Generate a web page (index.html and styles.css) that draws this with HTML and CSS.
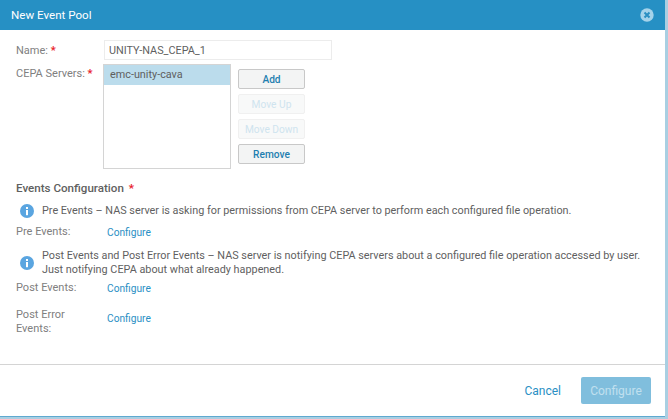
FILE: index.html
```html
<!DOCTYPE html>
<html lang="en">
<head>
  <meta charset="UTF-8">
  <meta name="viewport" content="width=device-width, initial-scale=1.0">
  <title>New Event Pool</title>
  <link rel="stylesheet" href="styles.css">
</head>
<body>

  <div class="dialog">
    <!-- Title bar -->
    <div class="dialog-header">
      <span>New Event Pool</span>
      <svg class="close-icon" width="14" height="14" viewBox="0 0 14 14">
        <circle cx="7" cy="7" r="6.7" fill="#a5d3ea"/>
        <path d="M4.5 4.5l5 5M9.5 4.5l-5 5" stroke="#2a8fc2" stroke-width="2" fill="none"/>
      </svg>
    </div>

    <div class="dialog-body">
      <div class="name-row">
        <label class="field-label">Name: <span class="required">*</span></label>
        <input class="name-input" type="text" value="UNITY-NAS_CEPA_1">
      </div>

      <div class="servers-row">
        <label class="field-label">CEPA Servers: <span class="required">*</span></label>
        <div class="server-list">
          <div class="server-item">emc-unity-cava</div>
        </div>
        <div class="server-buttons">
          <button class="btn">Add</button>
          <button class="btn" disabled>Move Up</button>
          <button class="btn" disabled>Move Down</button>
          <button class="btn">Remove</button>
        </div>
      </div>

      <h3 class="section-title">Events Configuration <span class="required">*</span></h3>

      <div class="info-row info-pre">
        <svg class="info-icon" width="14" height="14" viewBox="0 0 14 14">
          <circle cx="7" cy="7" r="7" fill="#5aa5e0"/>
          <rect x="6" y="6" width="2" height="5.2" fill="#fff"/>
          <rect x="6" y="3" width="2" height="2" fill="#fff"/>
        </svg>
        <p>Pre Events – NAS server is asking for permissions from CEPA server to perform each configured file operation.</p>
      </div>
      <div class="event-row">
        <span class="event-label">Pre Events:</span>
        <a class="link" href="#">Configure</a>
      </div>

      <div class="info-row info-post">
        <svg class="info-icon" width="14" height="14" viewBox="0 0 14 14">
          <circle cx="7" cy="7" r="7" fill="#5aa5e0"/>
          <rect x="6" y="6" width="2" height="5.2" fill="#fff"/>
          <rect x="6" y="3" width="2" height="2" fill="#fff"/>
        </svg>
        <p>Post Events and Post Error Events – NAS server is notifying CEPA servers about a configured file operation accessed by user.<br>Just notifying CEPA about what already happened.</p>
      </div>
      <div class="event-row event-post">
        <span class="event-label">Post Events:</span>
        <a class="link" href="#">Configure</a>
      </div>
      <div class="event-row event-error">
        <span class="event-label">Post Error Events:</span>
        <a class="link" href="#">Configure</a>
      </div>
    </div>

    <div class="dialog-footer">
      <a class="cancel-link" href="#">Cancel</a>
      <button class="primary-btn" disabled>Configure</button>
    </div>
  </div>

</body>
</html>
```

FILE: styles.css
```css
html, body {
  margin: 0;
  height: 100%;
}
body {
  font-family: Roboto, "Liberation Sans", sans-serif;
  font-size: 10.83px;
  color: #5f5f5f;
  background-color: #a9cfe2;
  overflow: hidden;
}
.dialog {
  width: 665px;
  height: 416px;
  background-color: #fff;
  display: flex;
  flex-direction: column;
  border-bottom: 1px solid #5fa9d0;
}
.dialog-header {
  height: 30px;
  flex: none;
  background-color: #2690c4;
  color: #fff;
  font-size: 11.6px;
  display: flex;
  align-items: center;
  justify-content: space-between;
  padding: 0 11px 0 11px;
}
.close-icon {
  display: block;
}
.dialog-body {
  flex: 1;
  padding: 10px 0 0 16px;
}
.field-label {
  width: 88px;
  flex: none;
  color: #808080;
  font-size: 11px;
}
.required {
  color: #e8212b;
  font-weight: bold;
}
.name-row {
  display: flex;
  align-items: center;
  height: 20px;
}
.name-input {
  width: 228px;
  height: 20px;
  box-sizing: border-box;
  border: 1px solid #ececec;
  padding: 0 4px;
  margin: 0;
  font: inherit;
  color: #5f5f5f;
  outline: none;
}
.servers-row {
  display: flex;
  margin-top: 4px;
}
.servers-row .field-label {
  width: 87px;
  padding-top: 3px;
}
.server-list {
  width: 128px;
  height: 105px;
  box-sizing: border-box;
  border: 1px solid #d4d4d4;
}
.server-item {
  height: 20px;
  line-height: 19px;
  padding-left: 6px;
  background-color: #bbdcec;
}
.server-buttons {
  display: flex;
  flex-direction: column;
  gap: 5px;
  margin: 5px 0 0 7px;
}
.btn {
  width: 67px;
  height: 20px;
  box-sizing: border-box;
  padding: 0;
  border: 1px solid #c8c8c8;
  border-radius: 2px;
  background-color: #f3f4f4;
  color: #1f7fb0;
  font: inherit;
  font-size: 10.2px;
  font-weight: 500;
}
.btn:disabled {
  border-color: #f0f0f0;
  background-color: #f8f9f9;
  color: #cfe4ef;
  font-weight: 400;
}
.section-title {
  margin: 12px 0 0;
  font-size: 11.6px;
  line-height: 14px;
  font-weight: 500;
  color: #5f5f5f;
}
.section-title .required {
  margin-left: 2px;
}
.info-row {
  display: flex;
  align-items: center;
  gap: 8px;
  padding-left: 4px;
}
.info-row p {
  margin: 0;
  line-height: 14px;
  white-space: nowrap;
}
.info-pre {
  margin-top: 9px;
}
.info-post {
  margin-top: 10px;
}
.info-icon {
  flex: none;
}
.event-row {
  display: flex;
  align-items: center;
  margin-top: 7px;
  color: #808080;
  font-size: 11px;
}
.event-label {
  width: 91px;
  flex: none;
  line-height: 14px;
}
.event-post {
  margin-top: 4px;
}
.event-error {
  margin-top: 13px;
}
.event-error .event-label {
  width: 60px;
  margin-right: 31px;
}
.event-error .link {
  margin-bottom: 8px;
}
.link {
  color: #2a8fc4;
  font-size: 10.2px;
  text-decoration: none;
}
.dialog-footer {
  height: 52px;
  flex: none;
  box-sizing: border-box;
  border-top: 1px solid #d4d4d4;
  display: flex;
  align-items: center;
  justify-content: flex-end;
  padding: 0 14px 0 0;
}
.cancel-link {
  color: #2a8fc4;
  font-size: 12px;
  text-decoration: none;
  margin-right: 20px;
}
.primary-btn {
  width: 70px;
  height: 27px;
  border: none;
  border-radius: 2px;
  background-color: #80bedd;
  color: #c0e0ef;
  font: inherit;
  font-size: 12px;
}
```
